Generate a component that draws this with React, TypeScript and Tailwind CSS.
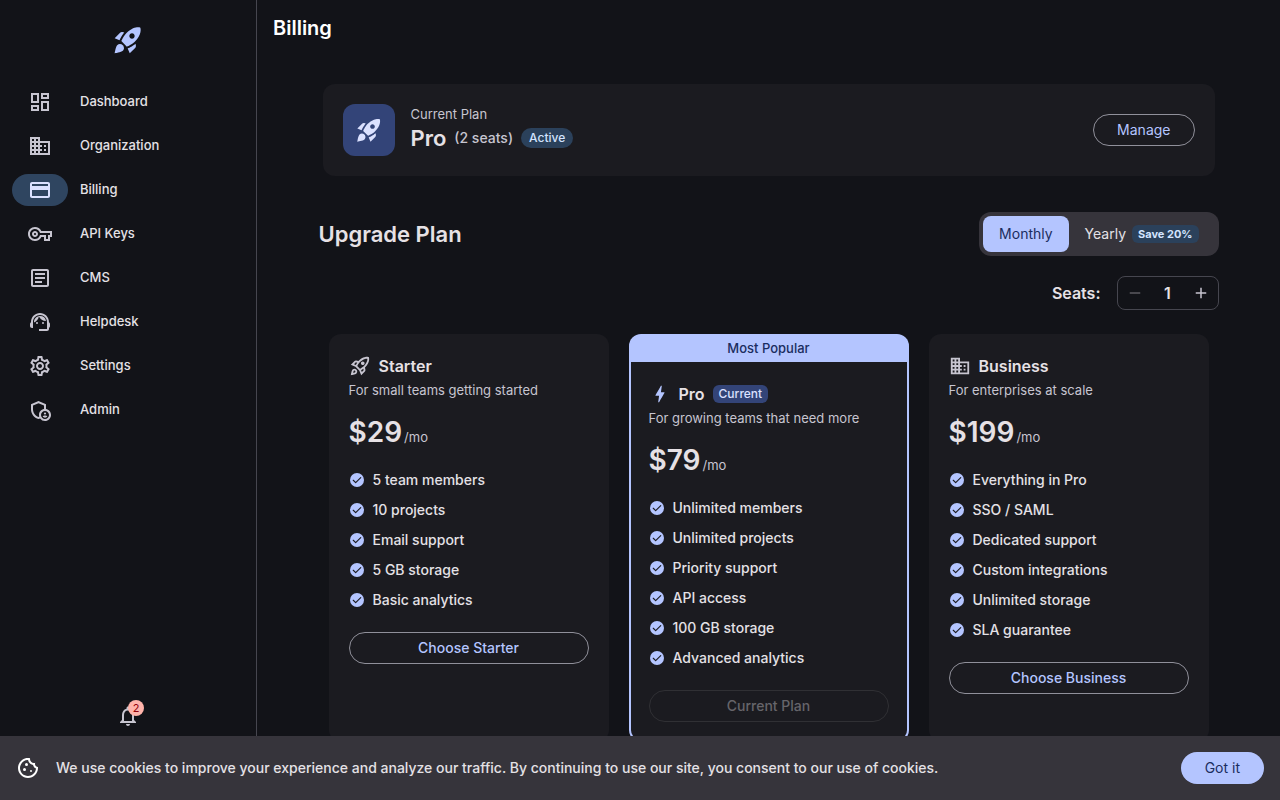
import React, { useState } from 'react';
import type { IconType } from 'react-icons';
import {
  MdAdd,
  MdBolt,
  MdCreditCard,
  MdDomain,
  MdOutlineAdminPanelSettings,
  MdOutlineArticle,
  MdOutlineCookie,
  MdOutlineDashboard,
  MdOutlineNotifications,
  MdOutlineRocketLaunch,
  MdOutlineSettings,
  MdOutlineSupportAgent,
  MdOutlineVpnKey,
  MdRemove,
  MdRocketLaunch,
} from 'react-icons/md';

interface NavItem {
  label: string;
  icon: IconType;
}

interface Plan {
  name: string;
  tagline: string;
  monthly: number;
  icon: IconType;
  features: string[];
  popular?: boolean;
  current?: boolean;
}

const NAV_ITEMS: NavItem[] = [
  { label: 'Dashboard', icon: MdOutlineDashboard },
  { label: 'Organization', icon: MdDomain },
  { label: 'Billing', icon: MdCreditCard },
  { label: 'API Keys', icon: MdOutlineVpnKey },
  { label: 'CMS', icon: MdOutlineArticle },
  { label: 'Helpdesk', icon: MdOutlineSupportAgent },
  { label: 'Settings', icon: MdOutlineSettings },
  { label: 'Admin', icon: MdOutlineAdminPanelSettings },
];

const PLANS: Plan[] = [
  {
    name: 'Starter',
    tagline: 'For small teams getting started',
    monthly: 29,
    icon: MdOutlineRocketLaunch,
    features: ['5 team members', '10 projects', 'Email support', '5 GB storage', 'Basic analytics'],
  },
  {
    name: 'Pro',
    tagline: 'For growing teams that need more',
    monthly: 79,
    icon: MdBolt,
    features: [
      'Unlimited members',
      'Unlimited projects',
      'Priority support',
      'API access',
      '100 GB storage',
      'Advanced analytics',
    ],
    popular: true,
    current: true,
  },
  {
    name: 'Business',
    tagline: 'For enterprises at scale',
    monthly: 199,
    icon: MdDomain,
    features: [
      'Everything in Pro',
      'SSO / SAML',
      'Dedicated support',
      'Custom integrations',
      'Unlimited storage',
      'SLA guarantee',
    ],
  },
];

const CheckCircle: React.FC = () => (
  <svg viewBox="0 0 24 24" className="size-4 shrink-0" aria-hidden="true">
    <circle cx="12" cy="12" r="10.5" fill="#b4c5ff" />
    <path
      d="M6.4 12.4 10 16l7.6-7.6"
      fill="none"
      stroke="#1b1b20"
      strokeWidth="1.7"
      strokeLinecap="round"
      strokeLinejoin="round"
    />
  </svg>
);

const Sidebar: React.FC = () => (
  <aside className="flex w-[257px] shrink-0 flex-col border-r border-[#46464f]">
    <div className="flex h-20 items-center justify-center">
      <MdRocketLaunch className="size-8 text-[#b4c5ff]" />
    </div>
    <nav className="flex flex-col gap-3 px-3 pt-1.5">
      {NAV_ITEMS.map(({ label, icon: Icon }) => {
        const active = label === 'Billing';
        return (
          <a key={label} href="#" aria-current={active ? 'page' : undefined} className="flex items-center gap-3">
            <span
              className={`flex h-8 w-14 items-center justify-center rounded-full ${
                active ? 'bg-[#2f4560] text-[#dbe1ff]' : 'text-[#c7c5d0]'
              }`}
            >
              <Icon className="size-6" />
            </span>
            <span className="text-[13px] font-medium text-[#e4e1e6]">{label}</span>
          </a>
        );
      })}
    </nav>
    <div className="mt-auto flex justify-center pb-2">
      <button aria-label="Notifications" className="relative text-[#c7c5d0]">
        <MdOutlineNotifications className="size-6" />
        <span className="absolute -top-1 -right-1 flex size-4 items-center justify-center rounded-full bg-[#ffb4ab] text-[11px] text-[#93000a]">
          2
        </span>
      </button>
    </div>
  </aside>
);

const CurrentPlanCard: React.FC = () => (
  <section className="mx-1 flex items-center rounded-xl bg-[#1b1b20] p-5">
    <div className="flex size-13 items-center justify-center rounded-xl bg-[#334478]">
      <MdRocketLaunch className="size-7 text-[#dbe1ff]" />
    </div>
    <div className="ml-4">
      <p className="text-[13px] leading-4 text-[#c7c5d0]">Current Plan</p>
      <div className="flex h-8 items-center gap-2">
        <h2 className="text-[22px] font-semibold text-[#e6e1e5]">Pro</h2>
        <span className="text-sm font-medium text-[#c7c5d0]">(2 seats)</span>
        <span className="rounded-full bg-[#2b415b] px-2 text-xs leading-5 font-medium text-[#d3e4ff]">Active</span>
      </div>
    </div>
    <button className="ml-auto h-8 rounded-full border border-[#90909a] px-[23px] text-sm text-[#b4c5ff]">
      Manage
    </button>
  </section>
);

const PlanCard: React.FC<{ plan: Plan; yearly: boolean; seats: number }> = ({ plan, yearly, seats }) => {
  const Icon = plan.icon;
  const price = Math.round(plan.monthly * seats * (yearly ? 0.8 : 1));

  return (
    <article className={`flex flex-col rounded-xl ${plan.popular ? 'bg-[#b4c5ff] px-0.5 pb-0.5' : 'bg-[#1b1b20]'}`}>
      {plan.popular && (
        <div className="text-center text-[13px] leading-7 font-medium text-[#1b2d60]">Most Popular</div>
      )}
      <div className={plan.popular ? 'flex-1 rounded-b-[10px] bg-[#1b1b20] px-[18px] pt-5 pb-[18px]' : 'p-5'}>
        <div className="flex h-6 items-center gap-2">
          <Icon className={`size-[22px] ${plan.popular ? 'text-[#b4c5ff]' : 'text-[#c7c5d0]'}`} />
          <h3 className="text-base font-semibold text-[#e6e1e5]">{plan.name}</h3>
          {plan.current && (
            <span className="rounded-md bg-[#334478] px-1.5 text-xs leading-[18px] font-medium text-[#dbe1ff]">
              Current
            </span>
          )}
        </div>
        <p className="mt-1 text-[13px] leading-4 text-[#c7c5d0]">{plan.tagline}</p>
        <p className="mt-4 flex h-9 items-baseline gap-0.5">
          <span className="text-[28px] leading-9 font-semibold text-[#e6e1e5]">${price}</span>
          <span className="text-[13px] leading-4 text-[#c7c5d0]">/mo</span>
        </p>
        <ul className="mt-[15px] flex flex-col">
          {plan.features.map((feature) => (
            <li key={feature} className="flex h-[30px] items-center gap-2 text-sm font-medium text-[#e4e1e6]">
              <CheckCircle />
              {feature}
            </li>
          ))}
        </ul>
        <button
          disabled={plan.current}
          className="mt-[17px] h-8 w-full rounded-full border border-[#90909a] text-sm font-medium text-[#b4c5ff] disabled:border-[#303034] disabled:text-[#66656a]"
        >
          {plan.current ? 'Current Plan' : `Choose ${plan.name}`}
        </button>
      </div>
    </article>
  );
};

const App: React.FC = () => {
  const [yearly, setYearly] = useState(false);
  const [seats, setSeats] = useState(1);
  const [cookieBar, setCookieBar] = useState(true);

  return (
    <div className="flex h-screen flex-col bg-[#121318] font-['Inter',sans-serif]">
      <div className="flex min-h-0 flex-1">
        <Sidebar />
        <main className="min-w-0 flex-1 overflow-y-auto [scrollbar-width:none]">
          <h1 className="flex h-14 items-center px-4 text-xl font-semibold text-white">Billing</h1>

          <div className="mx-auto max-w-[900px] pt-7 pb-6">
            <CurrentPlanCard />

            <div className="mt-9 flex items-center justify-between">
              <h2 className="text-[22px] font-semibold text-[#e6e1e5]">Upgrade Plan</h2>
              <div className="flex h-11 rounded-xl bg-[#36343b] p-1 text-sm">
                <button
                  onClick={() => setYearly(false)}
                  className={`rounded-lg px-4 ${yearly ? 'text-[#e4e1e6]' : 'bg-[#b4c5ff] text-[#1b2d60]'}`}
                >
                  Monthly
                </button>
                <button
                  onClick={() => setYearly(true)}
                  className={`flex items-center gap-1.5 rounded-lg px-4 ${
                    yearly ? 'bg-[#b4c5ff] text-[#1b2d60]' : 'text-[#e4e1e6]'
                  }`}
                >
                  Yearly
                  <span className="rounded-md bg-[#2b415b] px-1.5 text-[11px] leading-[18px] font-bold text-[#d3e4ff]">
                    Save 20%
                  </span>
                </button>
              </div>
            </div>

            <div className="mt-5 flex items-center justify-end gap-4 text-[#e6e1e5]">
              <span className="text-base font-semibold">Seats:</span>
              <div className="flex h-[34px] items-center rounded-lg border border-[#46464f]">
                <button
                  aria-label="Remove seat"
                  disabled={seats === 1}
                  onClick={() => setSeats(seats - 1)}
                  className="flex h-8 w-[34px] items-center justify-center text-[#c7c5d0] disabled:text-[#5c5b61]"
                >
                  <MdRemove className="size-[18px]" />
                </button>
                <span className="w-8 text-center text-base font-semibold">{seats}</span>
                <button
                  aria-label="Add seat"
                  onClick={() => setSeats(seats + 1)}
                  className="flex h-8 w-[34px] items-center justify-center text-[#c7c5d0]"
                >
                  <MdAdd className="size-[18px]" />
                </button>
              </div>
            </div>

            <div className="mt-6 grid grid-cols-3 gap-5 px-2.5">
              {PLANS.map((plan) => (
                <PlanCard key={plan.name} plan={plan} yearly={yearly} seats={seats} />
              ))}
            </div>
          </div>
        </main>
      </div>

      {cookieBar && (
        <footer className="flex h-16 shrink-0 items-center gap-4 bg-[#36343b] px-4">
          <MdOutlineCookie className="size-6 shrink-0 text-white" />
          <p className="flex-1 text-sm font-medium text-[#e4e1e6]">
            We use cookies to improve your experience and analyze our traffic. By continuing to use our site, you
            consent to our use of cookies.
          </p>
          <button
            onClick={() => setCookieBar(false)}
            className="h-8 rounded-full bg-[#b4c5ff] px-6 text-sm text-[#1b2d60]"
          >
            Got it
          </button>
        </footer>
      )}
    </div>
  );
};

export default App;
